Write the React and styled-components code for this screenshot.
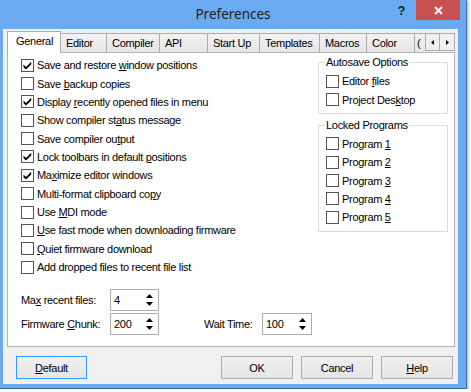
import React from 'react';
import styled, { createGlobalStyle } from 'styled-components';

const GlobalStyle = createGlobalStyle`
  html, body { margin: 0; padding: 0; background: #ffffff; }
  body { font-family: "Liberation Sans", Arial, sans-serif; }
  * { box-sizing: border-box; }
`;

const Window = styled.div`
  width: 467px;
  height: 389px;
  background: #6aaaf0;
  border-right: 1px solid #3f6d9e;
  border-bottom: 1px solid #3f6d9e;
  box-shadow: 1px 1px 3px rgba(0, 0, 0, 0.35);
  display: flex;
  flex-direction: column;
`;

const TitleBar = styled.div`
  height: 29px;
  flex: none;
  display: grid;
  grid-template-columns: 1fr auto 1fr;
  align-items: start;
`;

const Title = styled.div`
  grid-column: 2;
  font-family: "Noto Sans", "Open Sans", sans-serif;
  font-size: 13.5px;
  line-height: 29px;
  color: #222;
`;

const CaptionButtons = styled.div`
  grid-column: 3;
  justify-self: end;
  display: flex;
  margin-right: 6px;
`;

const HelpButton = styled.div`
  width: 29px;
  height: 20px;
  display: flex;
  align-items: center;
  justify-content: center;
  font-family: "Liberation Sans", Arial, sans-serif;
  font-weight: bold;
  font-size: 13px;
  color: #1e1e1e;
`;

const CloseButton = styled.div`
  width: 44px;
  height: 20px;
  background: #c75050;
  display: flex;
  align-items: center;
  justify-content: center;
  padding-top: 1px;
`;

const Client = styled.div`
  flex: 1;
  margin: 0 8px 4px 3px;
  background: #f0f0f0;
  padding: 2px 3px 5px 4px;
  display: flex;
  flex-direction: column;
  font-size: 11px;
  letter-spacing: -0.3px;
  color: #000;
`;

const TabRow = styled.div`
  height: 21px;
  flex: none;
  display: flex;
  align-items: flex-end;
`;

const TabList = styled.div`
  flex: 1;
  min-width: 0;
  height: 22px;
  margin-bottom: -1px;
  display: flex;
  align-items: flex-end;
  overflow: hidden;
  position: relative;
  z-index: 1;
`;

const Tab = styled.div`
  flex: 0 0 ${(p) => p.$w}px;
  height: ${(p) => (p.$active ? 22 : 19)}px;
  margin-bottom: ${(p) => (p.$active ? 0 : 1)}px;
  margin-left: ${(p) => (p.$first ? 0 : -1)}px;
  border: 1px solid #acacac;
  border-bottom: none;
  background: ${(p) => (p.$active ? '#ffffff' : 'linear-gradient(#f2f2f2, #e6e6e6)')};
  padding-left: ${(p) => (p.$active ? 8 : p.$pad ?? 5)}px;
  padding-bottom: ${(p) => (p.$active ? 3 : 0)}px;
  display: flex;
  align-items: center;
  white-space: nowrap;
  position: relative;
  z-index: ${(p) => (p.$active ? 2 : 1)};
`;

const ScrollButtons = styled.div`
  flex: none;
  display: flex;
  margin-bottom: 1px;
`;

const ScrollButton = styled.div`
  width: ${(p) => (p.$first ? 15 : 16)}px;
  height: 18px;
  margin-left: ${(p) => (p.$first ? 0 : -1)}px;
  border: 1px solid #acacac;
  background: #f0f0f0;
  display: flex;
  align-items: center;
  justify-content: center;
`;

const Panel = styled.div`
  height: 295px;
  flex: none;
  border: 1px solid #b4b4b4;
  background: #ffffff;
  padding: 3px 6px 0 13px;
  display: flex;
  flex-direction: column;
`;

const TopArea = styled.div`
  display: flex;
  justify-content: space-between;
`;

const LeftColumn = styled.div`
  display: flex;
  flex-direction: column;
`;

const RightColumn = styled.div`
  width: 130px;
  display: flex;
  flex-direction: column;
  gap: 5px;
`;

const CheckRow = styled.label`
  height: 18.36px;
  display: flex;
  align-items: center;
  gap: 3px;
  white-space: nowrap;
`;

const Box = styled.span`
  width: 13px;
  height: 13px;
  flex: none;
  border: 1px solid #555555;
  background: #ffffff;
  display: flex;
  align-items: center;
  justify-content: center;
`;

const Group = styled.fieldset`
  margin: 0;
  min-width: 0;
  border: 1px solid #dcdcdc;
  padding: 0 6px 4px 7px;
`;

const Legend = styled.legend`
  padding: 0 1px;
  margin-left: -1px;
  line-height: 13px;
`;

const GroupRows = styled.div`
  padding-top: 3px;
  display: flex;
  flex-direction: column;
`;

const FieldsArea = styled.div`
  margin-top: 13px;
  display: flex;
  flex-direction: column;
  gap: 2px;
`;

const FieldRow = styled.div`
  height: 22px;
  display: flex;
  align-items: center;
`;

const FieldLabel = styled.span`
  flex: 0 0 ${(p) => p.$w}px;
  margin-left: ${(p) => p.$ml || 0}px;
  white-space: nowrap;
`;

const SpinBox = styled.div`
  flex: 0 0 ${(p) => p.$w}px;
  height: 22px;
  border: 1px solid #abadb3;
  background: #ffffff;
  display: flex;
  align-items: center;
  padding: 0 5px 0 3px;
`;

const SpinValue = styled.span`
  flex: 1;
`;

const ButtonRow = styled.div`
  margin-top: 9px;
  height: 23px;
  flex: none;
  display: flex;
  gap: 8px;
  padding: 0 2px 0 9px;
`;

const Spacer = styled.div`
  flex: 1;
`;

const Button = styled.button`
  width: ${(p) => p.$w || 72}px;
  height: 23px;
  padding: 0;
  border: 1px solid ${(p) => (p.$focused ? '#3399ff' : '#acacac')};
  background: linear-gradient(#f0f0f0, #e5e5e5);
  font-family: "Liberation Sans", Arial, sans-serif;
  font-size: 11px;
  letter-spacing: -0.3px;
  color: #000;
`;

const CheckMark = () => (
  <svg width="11" height="11" viewBox="0 0 11 11">
    <polygon points="1.5,4.6 4,7 9.2,1.8 9.2,4.4 4,9.6 1.5,7.2" fill="#000" />
  </svg>
);

const Checkbox = ({ checked, children }) => (
  <CheckRow>
    <Box>{checked && <CheckMark />}</Box>
    <span>{children}</span>
  </CheckRow>
);

const SpinArrows = () => (
  <svg width="7" height="12" viewBox="0 0 7 12">
    <polygon points="3.5,0 7,4 0,4" fill="#000" />
    <polygon points="0,8 7,8 3.5,12" fill="#000" />
  </svg>
);

const Spin = ({ w, value }) => (
  <SpinBox $w={w}>
    <SpinValue>{value}</SpinValue>
    <SpinArrows />
  </SpinBox>
);

const tabs = [
  { label: 'General', w: 54, active: true },
  { label: 'Editor', w: 47 },
  { label: 'Compiler', w: 54 },
  { label: 'API', w: 49 },
  { label: 'Start Up', w: 53 },
  { label: 'Templates', w: 61 },
  { label: 'Macros', w: 48 },
  { label: 'Color', w: 49 },
  { label: '(', w: 12, pad: 2 },
];

export default function App() {
  return (
    <>
      <GlobalStyle />
      <Window>
        <TitleBar>
          <Title>Preferences</Title>
          <CaptionButtons>
            <HelpButton>?</HelpButton>
            <CloseButton>
              <svg width="9" height="9" viewBox="0 0 9 9">
                <path d="M1 1 L8 8 M8 1 L1 8" stroke="#fff" strokeWidth="2" />
              </svg>
            </CloseButton>
          </CaptionButtons>
        </TitleBar>
        <Client>
          <TabRow>
            <TabList>
              {tabs.map((t, i) => (
                <Tab key={t.label} $w={t.w} $pad={t.pad} $active={t.active} $first={i === 0}>
                  {t.label}
                </Tab>
              ))}
            </TabList>
            <ScrollButtons>
              <ScrollButton $first>
                <svg width="3" height="5" viewBox="0 0 3 5">
                  <polygon points="3,0 3,5 0,2.5" fill="#000" />
                </svg>
              </ScrollButton>
              <ScrollButton>
                <svg width="3" height="5" viewBox="0 0 3 5">
                  <polygon points="0,0 0,5 3,2.5" fill="#000" />
                </svg>
              </ScrollButton>
            </ScrollButtons>
          </TabRow>
          <Panel>
            <TopArea>
              <LeftColumn>
                <Checkbox checked>Save and restore <u>w</u>indow positions</Checkbox>
                <Checkbox>Save <u>b</u>ackup copies</Checkbox>
                <Checkbox checked>Display <u>r</u>ecently opened files in menu</Checkbox>
                <Checkbox>Show compiler st<u>a</u>tus message</Checkbox>
                <Checkbox>Save compiler ou<u>t</u>put</Checkbox>
                <Checkbox checked>Lock toolbars in default <u>p</u>ositions</Checkbox>
                <Checkbox checked>Ma<u>x</u>imize editor windows</Checkbox>
                <Checkbox>Multi-format clipboard co<u>p</u>y</Checkbox>
                <Checkbox>Use <u>M</u>DI mode</Checkbox>
                <Checkbox><u>U</u>se fast mode when downloading firmware</Checkbox>
                <Checkbox><u>Q</u>uiet firmware download</Checkbox>
                <Checkbox>Add dropped files to recent file list</Checkbox>
              </LeftColumn>
              <RightColumn>
                <Group>
                  <Legend>Autosave Options</Legend>
                  <GroupRows>
                    <Checkbox>Editor <u>f</u>iles</Checkbox>
                    <Checkbox>Project Des<u>k</u>top</Checkbox>
                  </GroupRows>
                </Group>
                <Group>
                  <Legend>Locked Programs</Legend>
                  <GroupRows>
                    {[1, 2, 3, 4, 5].map((n) => (
                      <Checkbox key={n}>
                        Program <u>{n}</u>
                      </Checkbox>
                    ))}
                  </GroupRows>
                </Group>
              </RightColumn>
            </TopArea>
            <FieldsArea>
              <FieldRow>
                <FieldLabel $w={89}>Ma<u>x</u> recent files:</FieldLabel>
                <Spin w={49} value="4" />
              </FieldRow>
              <FieldRow>
                <FieldLabel $w={89}>Firmware <u>C</u>hunk:</FieldLabel>
                <Spin w={49} value="200" />
                <FieldLabel $w={58} $ml={45}>Wait Time:</FieldLabel>
                <Spin w={50} value="100" />
              </FieldRow>
            </FieldsArea>
          </Panel>
          <ButtonRow>
            <Button $w={71} $focused>
              <u>D</u>efault
            </Button>
            <Spacer />
            <Button>OK</Button>
            <Button>Cancel</Button>
            <Button>
              <u>H</u>elp
            </Button>
          </ButtonRow>
        </Client>
      </Window>
    </>
  );
}
